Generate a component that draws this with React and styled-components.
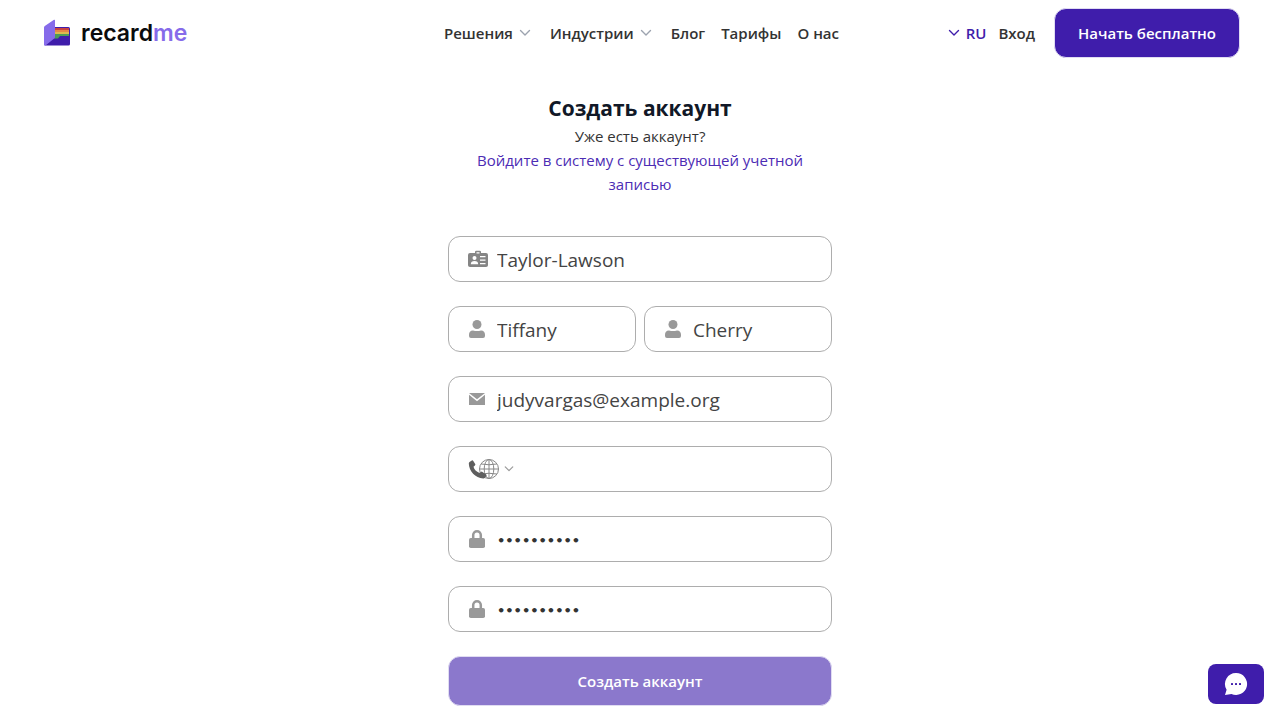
import React from "react";
import styled, { createGlobalStyle } from "styled-components";

const GlobalStyle = createGlobalStyle`
  *, *::before, *::after { box-sizing: border-box; }
  body {
    margin: 0;
    background: #fff;
    color: #333;
    font-family: "Open Sans", "Noto Sans", sans-serif;
    font-size: 15px;
    line-height: 24px;
  }
  a { color: inherit; text-decoration: none; }
  svg { display: block; flex: none; }
`;

const Header = styled.header`
  display: grid;
  grid-template-columns: 1fr auto 1fr;
  align-items: center;
  height: 66px;
  padding: 0 40px 0 43px;
`;

const Logo = styled.a`
  display: flex;
  align-items: center;
  gap: 10px;
  color: #0b0b0d;
  font-family: Inter, sans-serif;
  font-size: 23px;
  font-weight: 600;
`;

const LogoAccent = styled.span`
  color: #866bea;
`;

const Nav = styled.nav`
  display: flex;
  align-items: center;
  gap: 16px;
  font-weight: 600;
`;

const NavMenu = styled.button`
  display: flex;
  align-items: center;
  gap: 6px;
  padding: 0 3px 0 0;
  border: 0;
  background: none;
  color: inherit;
  font: inherit;
  cursor: pointer;
`;

const Account = styled.div`
  display: flex;
  align-items: center;
  justify-content: flex-end;
  font-weight: 600;
`;

const Language = styled(NavMenu)`
  padding: 0;
  margin-right: 12px;
  color: #3f1dab;
`;

const PrimaryButton = styled.button`
  height: 50px;
  padding: 0 24px;
  border: 1px solid #e0dcf2;
  border-radius: 12px;
  background: ${(p) => (p.$muted ? "#8b78cc" : "#3f1dab")};
  color: #fff;
  font: inherit;
  font-weight: 600;
  white-space: nowrap;
  cursor: pointer;
`;

const StartButton = styled(PrimaryButton)`
  width: 186px;
  margin-left: 19px;
  padding: 0;
`;

const Main = styled.main`
  width: 100%;
  max-width: 416px;
  margin: 0 auto;
  padding: 26px 16px 14px;
`;

const Intro = styled.section`
  margin-bottom: 40px;
  padding: 0 24px;
  text-align: center;
`;

const Title = styled.h1`
  margin: 0;
  color: #111827;
  font-size: 21px;
  font-weight: 700;
  line-height: 32px;
`;

const Line = styled.p`
  margin: 0;
`;

const SignIn = styled.a`
  color: #4c2cb4;
`;

const Form = styled.form`
  display: grid;
  gap: 24px;
`;

const Pair = styled.div`
  display: grid;
  grid-template-columns: 1fr 1fr;
  gap: 8px;
`;

const Field = styled.label`
  display: flex;
  align-items: center;
  height: 46px;
  min-width: 0;
  padding: 0 16px 0 19px;
  border: 1px solid #adadad;
  border-radius: 12px;
  background: #fff;
`;

const IconSlot = styled.span`
  display: flex;
  flex: none;
  width: 29px;
  color: #999;
`;

const TextInput = styled.input`
  flex: 1;
  min-width: 0;
  height: 44px;
  padding: 2px 0 0;
  border: 0;
  outline: 0;
  background: none;
  color: ${(p) => (p.type === "password" ? "#333" : "#444")};
  font-family: ${(p) => (p.type === "password" ? '"DejaVu Sans", sans-serif' : "inherit")};
  font-size: ${(p) => (p.type === "password" ? 13 : 19)}px;
  font-weight: ${(p) => (p.type === "password" ? 700 : 400)};
`;

const Country = styled.button`
  display: flex;
  align-items: center;
  gap: 4px;
  padding: 0;
  margin-right: 8px;
  border: 0;
  background: none;
  color: #666;
  cursor: pointer;
`;

const ChatButton = styled.button`
  position: fixed;
  right: 16px;
  bottom: 16px;
  display: grid;
  place-items: center;
  width: 56px;
  height: 40px;
  padding: 0;
  border: 0;
  border-radius: 8px;
  background: #3f1dab;
  cursor: pointer;
`;

const Chevron = ({ size = 12, color = "#9ca3af", weight = 1.4 }) => (
  <svg width={size} height={size} viewBox="0 0 12 12" fill="none" stroke={color} strokeWidth={weight} strokeLinecap="round" strokeLinejoin="round" aria-hidden="true">
    <path d="M1.5 3.500 6 8l4.500-4.500" />
  </svg>
);

const LogoMark = () => (
  <svg width="28" height="28" viewBox="0 0 28 28" aria-hidden="true">
    <path d="M10 8h15.500q1.500 0 1.500 1.500V25q0 1.500-1.500 1.500H2z" fill="#3f1dab" />
    <path d="M11 9h15v2H11z" fill="#c9443f" />
    <path d="M11 11h15v2H11z" fill="#e58745" />
    <path d="M11 13h15v2H11z" fill="#dcb850" />
    <path d="M11 15h15v2h-9l-2 2.500h-4z" fill="#4b9c58" />
    <path d="M1 8.500q0-1 .8-1.600L11 .8q1-.5 1 .7v16.500q0 1-.8 1.600L2.500 26.500H1z" fill="#866bea" />
  </svg>
);

const CardIcon = () => (
  <svg width="20" height="18" viewBox="0 0 20 18" aria-hidden="true">
    <path fill="#858585" fillRule="evenodd" d="M7 3V2Q7 .7 8.300.7h3.400Q13 .7 13 2v1h5q2 0 2 2v10.200q0 1.800-2 1.800H2q-2 0-2-1.800V5q0-2 2-2zm1.500-.8v1.300h3V2.200zM6.500 6a2 2 0 1 0 0 4 2 2 0 0 0 0-4M2.800 14.300h7.400c0-2-1.400-3.200-3.700-3.200s-3.700 1.200-3.700 3.200M12 6v1.300h5.500V6zm0 3.500v1.300h5.500V9.500zm0 3.500v1.300h5.500V13z" />
  </svg>
);

const PersonIcon = () => (
  <svg width="18" height="20" viewBox="0 0 18 20" fill="currentColor" aria-hidden="true">
    <circle cx="9" cy="5.500" r="4.500" />
    <path d="M5 11.500q4 1.200 8 0c2.700.1 4 1.700 4 4.200V17q0 2-2 2H3q-2 0-2-2v-1.300c0-2.500 1.300-4.100 4-4.200" />
  </svg>
);

const MailIcon = () => (
  <svg width="18" height="14" viewBox="0 0 18 14" fill="currentColor" aria-hidden="true">
    <path d="M1 1h16L9 7.200z" />
    <path d="m1 2.700 8 6.600 8-6.600V13H1z" />
  </svg>
);

const LockIcon = () => (
  <svg width="18" height="20" viewBox="0 0 18 20" aria-hidden="true">
    <path d="M5.200 10V6a3.800 3.800 0 0 1 7.600 0v4" fill="none" stroke="currentColor" strokeWidth="2.500" />
    <rect x="1" y="9" width="16" height="10" rx="1.800" fill="currentColor" />
  </svg>
);

const PhoneGlobe = () => (
  <svg width="32" height="22" viewBox="0 0 32 22" aria-hidden="true">
    <g fill="none" stroke="#888" strokeWidth="1">
      <circle cx="21" cy="11" r="9.500" />
      <ellipse cx="21" cy="11" rx="4.800" ry="9.500" />
      <path d="M21 1.500v19M11.500 11h19M13.200 6q7.800 1.500 15.600 0M13.200 16q7.800-1.500 15.600 0" />
    </g>
    <path fill="#5e5e5e" d="M1.500 4.100 3.800 2.500q.9-.5 1.500.4l1.900 3q.5.900-.3 1.600L5.500 8.700c.7 2.700 2.800 4.900 6 6.300l1.400-1.100q.8-.6 1.600 0l3.700 2.500q.8.700.2 1.500l-1.400 1.900q-.7.800-1.800.7C7.300 20 1 13.300.8 5.600q0-.9.7-1.500" />
  </svg>
);

const ChatIcon = () => (
  <svg width="24" height="24" viewBox="0 0 24 24" aria-hidden="true">
    <path d="M12.200 1a11 11 0 1 1-4.700 21L1 23l1.600-5.300A11 11 0 0 1 12.200 1" fill="#fff" />
    <g fill="#3f1dab">
      <rect x="7" y="11" width="2" height="2" rx=".5" />
      <rect x="11" y="11" width="2" height="2" rx=".5" />
      <rect x="15" y="11" width="2" height="2" rx=".5" />
    </g>
  </svg>
);

const InputField = ({ icon, label, ...input }) => (
  <Field>
    <IconSlot>{icon}</IconSlot>
    <TextInput aria-label={label} {...input} />
  </Field>
);

export default function App() {
  return (
    <>
      <GlobalStyle />
      <Header>
        <Logo href="#">
          <LogoMark />
          <span>recard<LogoAccent>me</LogoAccent></span>
        </Logo>
        <Nav>
          <NavMenu type="button">Решения <Chevron /></NavMenu>
          <NavMenu type="button">Индустрии <Chevron /></NavMenu>
          <a href="#">Блог</a>
          <a href="#">Тарифы</a>
          <a href="#">О нас</a>
        </Nav>
        <Account>
          <Language type="button"><Chevron color="#3f1dab" />RU</Language>
          <a href="#">Вход</a>
          <StartButton type="button">Начать бесплатно</StartButton>
        </Account>
      </Header>
      <Main>
        <Intro>
          <Title>Создать аккаунт</Title>
          <Line>Уже есть аккаунт?</Line>
          <Line>
            <SignIn href="#">Войдите в систему с существующей учетной записью</SignIn>
          </Line>
        </Intro>
        <Form onSubmit={(e) => e.preventDefault()}>
          <InputField icon={<CardIcon />} label="Компания" defaultValue="Taylor-Lawson" />
          <Pair>
            <InputField icon={<PersonIcon />} label="Имя" defaultValue="Tiffany" />
            <InputField icon={<PersonIcon />} label="Фамилия" defaultValue="Cherry" />
          </Pair>
          <InputField icon={<MailIcon />} label="Эл. почта" type="email" defaultValue="judyvargas@example.org" />
          <Field as="div">
            <Country type="button" aria-label="Код страны">
              <PhoneGlobe />
              <Chevron size={10} color="#999" weight={1.4} />
            </Country>
            <TextInput type="tel" aria-label="Телефон" />
          </Field>
          <InputField icon={<LockIcon />} label="Пароль" type="password" defaultValue="Qwerty1234" />
          <InputField icon={<LockIcon />} label="Повторите пароль" type="password" defaultValue="Qwerty1234" />
          <PrimaryButton $muted type="submit">Создать аккаунт</PrimaryButton>
        </Form>
      </Main>
      <ChatButton type="button" aria-label="Чат"><ChatIcon /></ChatButton>
    </>
  );
}
